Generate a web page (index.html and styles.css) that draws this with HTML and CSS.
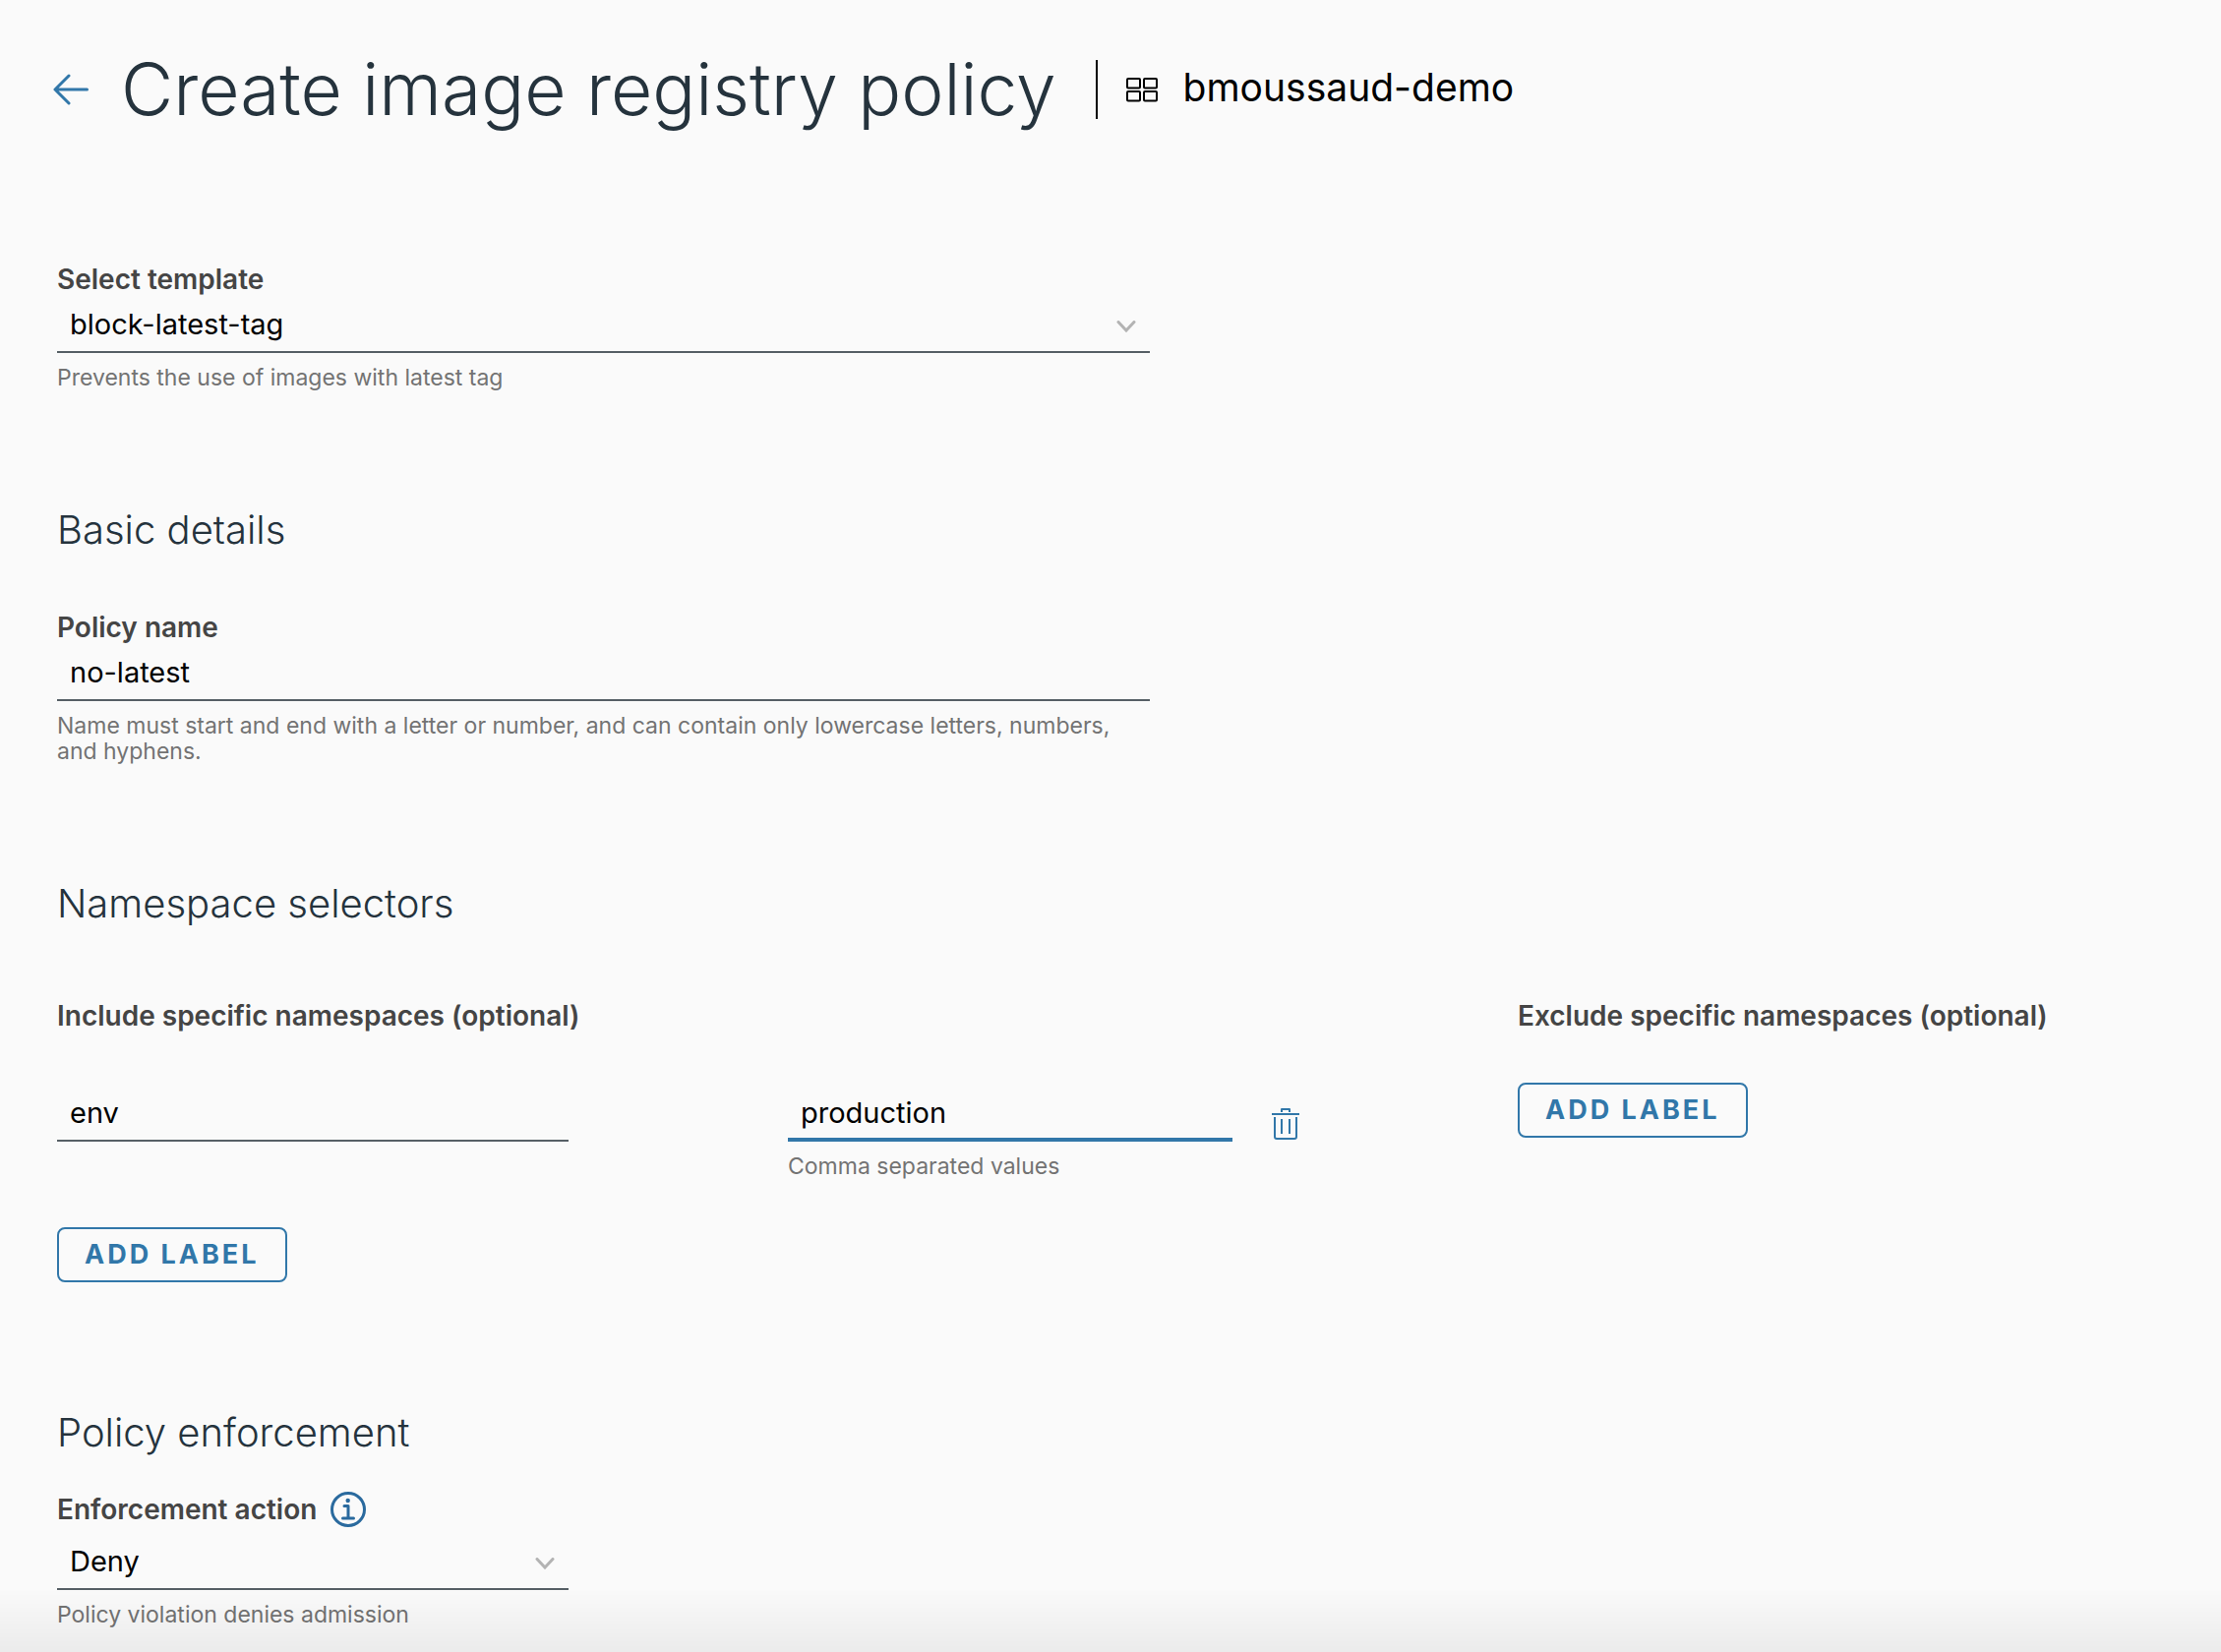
FILE: index.html
```html
<!DOCTYPE html>
<html lang="en">
<head>
<meta charset="utf-8">
<meta name="viewport" content="width=device-width, initial-scale=1">
<title>Create image registry policy</title>
<link rel="stylesheet" href="styles.css">
</head>
<body>
<header class="page-header">
  <a class="back" href="#" aria-label="Back">
    <svg width="36" height="32" viewBox="0 0 36 32" fill="none" stroke="currentColor" stroke-width="3" stroke-linecap="round" stroke-linejoin="round"><path d="M34.500 16H2M16 2 2 16l14 14"/></svg>
  </a>
  <h1 class="title">Create image registry policy</h1>
  <div class="context">
    <svg class="cluster" width="32" height="25" viewBox="0 0 32 25" fill="none" stroke="currentColor" stroke-width="2"><rect x="1" y="1" width="13" height="9.500" rx="1"/><rect x="18" y="1" width="13" height="9.500" rx="1"/><rect x="1" y="14" width="13" height="9.500" rx="1"/><rect x="18" y="14" width="13" height="9.500" rx="1"/></svg>
    <span class="context-name">bmoussaud-demo</span>
  </div>
</header>
<main>
  <form class="form">
    <section class="field">
      <label class="label" for="template">Select template</label>
      <div class="select">
        <select class="control" id="template"><option>block-latest-tag</option></select>
        <svg class="chevron" width="20" height="12" viewBox="0 0 20 12" fill="none" stroke="currentColor" stroke-width="3" stroke-linecap="round"><path d="m2 1.500 8 8.500 8-8.500"/></svg>
      </div>
      <p class="hint">Prevents the use of images with latest tag</p>
    </section>

    <section class="section">
      <h2 class="heading">Basic details</h2>
      <div class="field details">
        <label class="label" for="name">Policy name</label>
        <input class="control" id="name" type="text" value="no-latest">
        <p class="hint">Name must start and end with a letter or number, and can contain only lowercase letters, numbers, and hyphens.</p>
      </div>
    </section>

    <section class="section">
      <h2 class="heading">Namespace selectors</h2>
      <div class="selectors">
        <div>
          <h3 class="label">Include specific namespaces (optional)</h3>
          <div class="pair">
            <input class="control key" type="text" value="env" aria-label="Label key">
            <div>
              <input class="control active" type="text" value="production" aria-label="Label values">
              <p class="hint">Comma separated values</p>
            </div>
            <button class="remove" type="button" aria-label="Remove label">
              <svg width="28" height="34" viewBox="0 0 28 34" fill="none" stroke="currentColor" stroke-width="2" stroke-linejoin="round"><path d="M0 7h28M10 5V2h8v3M3 10v20q0 2 2 2h18q2 0 2-2V10M10 12v15M18 12v15"/></svg>
            </button>
          </div>
          <button class="button" type="button">ADD LABEL</button>
        </div>
        <div>
          <h3 class="label">Exclude specific namespaces (optional)</h3>
          <button class="button exclude" type="button">ADD LABEL</button>
        </div>
      </div>
    </section>

    <section class="section enforcement">
      <h2 class="heading">Policy enforcement</h2>
      <div class="field short">
        <div class="label-row">
          <label class="label" for="action">Enforcement action</label>
          <button class="info" type="button" aria-label="About enforcement actions">
            <svg width="36" height="36" viewBox="0 0 36 36" fill="none" stroke="currentColor" stroke-width="3"><circle cx="18" cy="18" r="16.500"/><path d="M14 14.500h4V27M12.500 27h11" stroke-linecap="round" stroke-linejoin="round"/><circle cx="17.700" cy="9" r="2.200" fill="currentColor" stroke="none"/></svg>
          </button>
        </div>
        <div class="select">
          <select class="control" id="action"><option>Deny</option></select>
          <svg class="chevron" width="20" height="12" viewBox="0 0 20 12" fill="none" stroke="currentColor" stroke-width="3" stroke-linecap="round"><path d="m2 1.500 8 8.500 8-8.500"/></svg>
        </div>
        <p class="hint">Policy violation denies admission</p>
      </div>
    </section>
  </form>
</main>
</body>
</html>
```
FILE: styles.css
```css
* {
  box-sizing: border-box;
}

body {
  margin: 0;
  padding: 51px 58px 22px;
  background: #fafafa;
  color: #000;
  font-family: Inter, "Liberation Sans", sans-serif;
}

/* Shade at the foot of the window */
body::after {
  content: "";
  position: fixed;
  inset: auto 0 0;
  height: 64px;
  background: linear-gradient(rgba(0, 0, 0, 0), rgba(0, 0, 0, 0.06));
  pointer-events: none;
}

h1, h2, h3, p {
  margin: 0;
}

svg {
  display: block;
}

button {
  font-family: inherit;
  background: none;
  cursor: pointer;
}

/* Header */
.page-header {
  display: flex;
  align-items: center;
  margin-left: -4px;
}

.back {
  color: #3177a9;
}

.title {
  margin-left: 33px;
  color: #25333d;
  font-size: 73px;
  font-weight: 300;
  line-height: 80px;
}

.context {
  display: flex;
  align-items: center;
  height: 60px;
  margin-left: 40px;
  padding-left: 29px;
  border-left: 2px solid #000;
}

.cluster {
  flex: none;
}

.context-name {
  margin-left: 26px;
  padding-bottom: 4px;
  font-size: 39px;
  line-height: 48px;
}

/* Form */
.form {
  margin-top: 135px;
}

.section {
  margin-top: 118px;
}

.heading {
  color: #25333d;
  font-size: 40px;
  font-weight: 300;
  line-height: 48px;
}

.field {
  max-width: 1111px;
}

.details {
  margin-top: 57px;
}

.label {
  display: block;
  color: #454545;
  font-size: 28px;
  font-weight: 600;
  line-height: 36px;
}

.control {
  display: block;
  width: 100%;
  height: 57px;
  margin: 0;
  padding: 0 13px;
  border: 0;
  border-bottom: 2px solid #565f65;
  border-radius: 0;
  outline: 0;
  appearance: none;
  background: transparent;
  color: #000;
  font-family: inherit;
  font-size: 29px;
}

.active {
  padding-top: 2px;
  border-bottom: 4px solid #3177a9;
}

.select {
  position: relative;
}

.chevron {
  position: absolute;
  right: 14px;
  top: 24px;
  color: #b3b3b3;
  pointer-events: none;
}

.hint {
  margin-top: 12px;
  color: #737373;
  font-size: 23px;
  line-height: 26px;
}

/* Namespace selectors */
.selectors {
  display: grid;
  grid-template-columns: minmax(0, 1485px) 1fr;
  margin-top: 72px;
}

.pair {
  display: grid;
  grid-template-columns: minmax(0, 703px) minmax(0, 452px) auto;
  column-gap: 40px;
  justify-content: start;
  align-items: start;
  margin: 53px 0 49px;
}

.key {
  max-width: 520px;
}

.remove {
  margin-top: 22px;
  padding: 0;
  border: 0;
  color: #3177a9;
}

.button {
  height: 56px;
  padding: 0 26px 2px;
  border: 2px solid #3177a9;
  border-radius: 8px;
  color: #3177a9;
  font-size: 27px;
  font-weight: 700;
  letter-spacing: 3px;
}

.exclude {
  margin-top: 50px;
}

/* Policy enforcement */
.enforcement {
  margin-top: 129px;
}

.short {
  max-width: 520px;
  margin-top: 36px;
}

.label-row {
  display: flex;
  align-items: center;
  gap: 14px;
  margin-bottom: 7px;
}

.info {
  padding: 0;
  border: 0;
  color: #2a6a9e;
}
```
